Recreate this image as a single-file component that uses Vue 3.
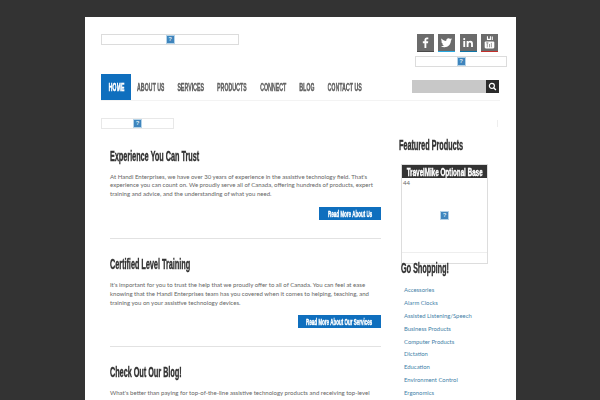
<template>
  <div class="page">
    <div class="wrap">
      <header class="top">
        <div class="ph logo-ph"><span class="q">?</span></div>
        <div class="top-right">
          <div class="socials">
            <a v-for="s in socials" :key="s.name" class="soc" :style="{ borderBottomColor: s.color }">
              <svg width="17" height="17" viewBox="0 0 23 19" preserveAspectRatio="xMidYMid meet" v-html="s.svg"></svg>
            </a>
          </div>
          <div class="ph social-ph"><span class="q">?</span></div>
        </div>
      </header>

      <nav class="nav">
        <a v-for="(item, i) in menu" :key="item" :class="['nav-item', { active: i === 0 }]"><span class="squeeze">{{ item }}</span></a>
        <div class="search">
          <div class="search-input"></div>
          <div class="search-btn">
            <svg width="9" height="9" viewBox="0 0 10 10"><circle cx="4.300" cy="4.300" r="2.800" fill="none" stroke="#fff" stroke-width="1.300" /><path d="M6.300 6.300 L8.800 8.800" stroke="#fff" stroke-width="1.500" /></svg>
          </div>
        </div>
      </nav>

      <div class="crumb-row">
        <div class="ph crumb-ph"><span class="q">?</span></div>
        <span class="tick"></span>
      </div>

      <div class="columns">
        <main class="main">
          <section v-for="p in posts" :key="p.title" class="post">
            <h2><span class="squeeze-left">{{ p.title }}</span></h2>
            <p>
              <template v-for="l in p.lines" :key="l">{{ l }}<br /></template>
            </p>
            <div v-if="p.button" class="btn-row">
              <a class="btn" :style="{ width: p.buttonWidth + 'px' }"><span class="squeeze">{{ p.button }}</span></a>
            </div>
          </section>
        </main>

        <aside class="side">
          <h3 class="side-title"><span class="squeeze-left">Featured Products</span></h3>
          <div class="feature">
            <div class="feature-head"><span class="squeeze">TravelMike Optional Base</span></div>
            <div class="feature-body">
              <span class="num">44</span>
              <span class="q">?</span>
            </div>
            <div class="feature-foot"></div>
          </div>
          <h3 class="shop-title"><span class="squeeze-left">Go Shopping!</span></h3>
          <ul class="cats">
            <li v-for="c in cats" :key="c">{{ c }}</li>
          </ul>
        </aside>
      </div>
    </div>
  </div>
</template>

<script setup>
const menu = ['HOME', 'ABOUT US', 'SERVICES', 'PRODUCTS', 'CONNECT', 'BLOG', 'CONTACT US']

const socials = [
  { name: 'facebook', color: '#4a4a4a', svg: '<path d="M12.600 17V10.500H14.900L15.200 7.800H12.600V6.300C12.600 5.500 12.800 5 13.900 5H15.300V2.700C15 2.700 14.200 2.600 13.300 2.600C11.400 2.600 10.100 3.800 10.100 5.900V7.800H7.900V10.500H10.100V17Z" fill="#fff"/>' },
  { name: 'twitter', color: '#29a9e1', svg: '<path d="M19 5C18.400 5.300 17.800 5.400 17.200 5.500C17.800 5.100 18.300 4.500 18.500 3.800C17.900 4.200 17.200 4.400 16.500 4.600C15.900 4 15.100 3.600 14.200 3.600C12.500 3.600 11.100 5 11.100 6.700C11.100 7 11.100 7.200 11.200 7.400C8.600 7.300 6.300 6 4.800 4.100C4.500 4.600 4.400 5.100 4.400 5.700C4.400 6.800 5 7.700 5.800 8.300C5.300 8.300 4.800 8.100 4.400 7.900C4.400 9.400 5.500 10.700 6.900 11C6.400 11.100 6 11.200 5.500 11.100C5.900 12.300 7.100 13.200 8.400 13.200C7 14.300 5.300 14.800 3.800 14.600C5.200 15.500 6.800 16 8.600 16C14.300 16 17.400 11.300 17.400 7.200V6.800C18 6.400 18.600 5.800 19 5Z" fill="#fff"/>' },
  { name: 'linkedin', color: '#0e76a8', svg: '<path d="M4.500 7.500H7V15.500H4.500ZM5.700 3.500A1.400 1.400 0 1 1 5.700 6.300A1.400 1.400 0 0 1 5.700 3.500ZM9 7.500H11.400V8.600C11.900 7.800 12.800 7.300 14 7.300C16.600 7.300 17.500 8.900 17.500 11.300V15.500H15V11.800C15 10.500 14.600 9.500 13.400 9.500C12.100 9.500 11.500 10.400 11.500 11.800V15.500H9Z" fill="#fff"/>' },
  { name: 'youtube', color: '#c4302b', svg: '<path d="M8 1H9.500V4.500H12V1H13.500V6H8ZM14.500 1.500H16V6H14.500Z" fill="#fff"/><rect x="5" y="8" width="13" height="9.500" rx="1.500" fill="#fff"/><path d="M7 10H10M8.500 10V16M11.500 11.500V16M14 10V16" stroke="#6b6b6b" stroke-width="0.900"/>' },
]

const posts = [
  {
    title: 'Experience You Can Trust',
    lines: [
      "At Handi Enterprises, we have over 30 years of experience in the assistive technology field. That's",
      'experience you can count on. We proudly serve all of Canada, offering hundreds of products, expert',
      'training and advice, and the understanding of what you need.',
    ],
    button: 'Read More About Us',
    buttonWidth: 62,
  },
  {
    title: 'Certified Level Training',
    lines: [
      "It's important for you to trust the help that we proudly offer to all of Canada. You can feel at ease",
      'knowing that the Handi Enterprises team has you covered when it comes to helping, teaching, and',
      'training you on your assistive technology devices.',
    ],
    button: 'Read More About Our Services',
    buttonWidth: 83,
  },
  {
    title: 'Check Out Our Blog!',
    lines: [
      "What's better than paying for top-of-the-line assistive technology products and receiving top-level",
      'assistance? Getting FREE advice on how to use them, and answers to all of your technology questions.',
    ],
  },
]

const cats = [
  'Accessories', 'Alarm Clocks', 'Assisted Listening/Speech', 'Business Products',
  'Computer Products', 'Dictation', 'Education', 'Environment Control', 'Ergonomics',
]
</script>

<style>
html, body { margin: 0; background: #333; overflow: hidden; }
</style>

<style scoped>
.page { height: 383px; padding: 17px 0 0 85px; overflow: hidden; background: #333; font-family: Lato, "Open Sans", sans-serif; }
.wrap { width: 431px; box-sizing: border-box; padding: 17px 16px 0; background: #fff; height: 400px; }
.squeeze, .squeeze-left { display: inline-block; white-space: nowrap; font-family: "Liberation Sans", Arial, sans-serif; font-weight: 700; -webkit-text-stroke: 0.450px currentColor; will-change: transform; }
.squeeze { transform: scaleX(var(--sx, 0.5)); transform-origin: center; }
.squeeze-left { transform: scaleX(var(--sx, 0.5)); transform-origin: left center; }

.top { display: flex; justify-content: space-between; height: 40px; }
.ph { height: 11px; border: 1px solid #dcdcdc; display: flex; align-items: center; justify-content: center; box-sizing: border-box; }
.q { display: inline-block; width: 7px; height: 7px; background: #3f85bd; outline: 1px solid #b5d3e8; color: #dcebf5; font: 700 6px/7px "Liberation Sans", sans-serif; text-align: center; }
.logo-ph { width: 138px; }
.top-right { width: 92px; margin-right: -7px; display: flex; flex-direction: column; }
.socials { display: flex; justify-content: flex-end; gap: 4.500px; margin-right: 9px; }
.soc { width: 17px; height: 18px; background: #6b6b6b; border-bottom: 1px solid; box-sizing: border-box; display: flex; align-items: center; justify-content: center; overflow: hidden; }
.social-ph { width: 92px; margin-top: 4px; }

.nav { display: flex; align-items: stretch; height: 26px; border-bottom: 1px solid #f3f3f3; --sx: 0.480; }
.nav-item { display: flex; align-items: center; justify-content: center; font-size: 11px; color: #666; }
.nav-item:nth-child(1) { width: 30px; }
.nav-item:nth-child(2) { width: 40px; }
.nav-item:nth-child(3) { width: 39px; }
.nav-item:nth-child(4) { width: 43px; }
.nav-item:nth-child(5) { width: 40px; }
.nav-item:nth-child(6) { width: 28px; }
.nav-item:nth-child(7) { width: 48px; }
.nav-item.active { background: #0f6fbe; color: #fff; }
.search { margin: -1px 1px 0 auto; display: flex; align-self: center; }
.search-input { width: 74px; height: 13px; background: #c8c8c8; }
.search-btn { width: 13px; height: 13px; background: #2b2b2b; display: flex; align-items: center; justify-content: center; }

.crumb-row { display: flex; justify-content: space-between; align-items: center; margin-top: 17px; }
.crumb-ph { width: 73px; border-color: #e8e8e8; }
.tick { width: 1px; height: 7px; margin-right: 2px; background: #eee; }

.columns { display: flex; gap: 18px; margin-top: 11px; }
.main { width: 280px; padding-left: 9px; box-sizing: border-box; padding-top: 8px; }
.post { border-bottom: 1px solid #e2e2e2; padding-bottom: 18px; margin-bottom: 17px; }
.post h2 { margin: 0; height: 16px; font-size: 14.500px; line-height: 16px; color: #333; }
.post p { margin: 8.500px 0 0; font-size: 6.050px; line-height: 8.900px; color: #666; white-space: nowrap; }
.btn-row { display: flex; justify-content: flex-end; margin-top: 8px; }
.btn { height: 13px; display: flex; align-items: center; justify-content: center; background: #0f6fbe; color: #fff; font-size: 9px; overflow: hidden; }

.side { width: 101px; }
.side-title { margin: -3px 0 0; height: 16px; font-size: 14.500px; line-height: 16px; color: #333; }
.feature { margin: 11px 0 0 2px; border: 1px solid #ddd; width: 87px; box-sizing: border-box; }
.feature-head { height: 13px; display: flex; align-items: center; justify-content: center; background: #333; color: #fff; font-size: 11px; overflow: hidden; --sx: 0.570; }
.feature-body { height: 74px; position: relative; border-bottom: 1px solid #eee; display: flex; align-items: center; justify-content: center; }
.num { position: absolute; left: 1px; top: 1px; font-size: 6px; line-height: 8px; color: #666; }
.feature-foot { height: 10px; }
.shop-title { margin: -4px 0 0 2px; height: 16px; font-size: 14.500px; line-height: 16px; color: #333; }
.cats { list-style: none; margin: 8px 0 0; padding: 0 0 0 5px; font-size: 5.900px; color: #3f7fa8; }
.cats li { height: 12.900px; line-height: 12.900px; white-space: nowrap; }
</style>
